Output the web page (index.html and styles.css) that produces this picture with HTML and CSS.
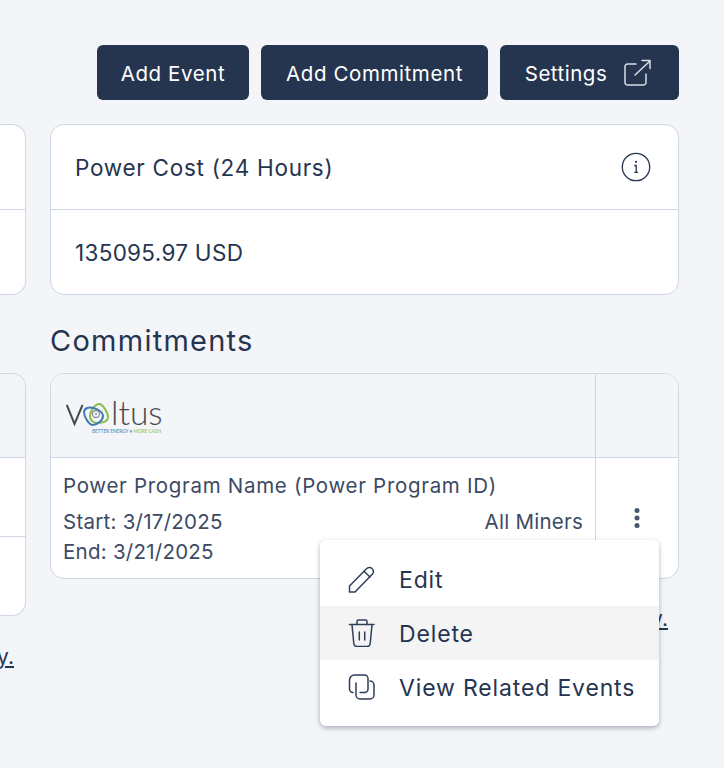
FILE: index.html
```html
<!DOCTYPE html>
<html lang="en">
<head>
<meta charset="utf-8">
<title>Power Program</title>
<link rel="stylesheet" href="styles.css">
</head>
<body>
<div class="page">
  <div class="actions">
    <button class="btn btn-event"><span class="btn-label">Add Event</span></button>
    <button class="btn btn-commit"><span class="btn-label">Add Commitment</span></button>
    <button class="btn btn-settings"><span class="btn-label">Settings</span>
      <svg class="ext" width="28" height="28" viewBox="0 0 28 28" fill="none" stroke="#d9dce3" stroke-width="1.500" stroke-linecap="round" stroke-linejoin="round"><path d="M13 5H4.500A2.500 2.500 0 0 0 2 7.500V23.500A2.500 2.500 0 0 0 4.500 26H20.500A2.500 2.500 0 0 0 23 23.500V15"/><path d="M12 16L27 2M19 1.500H27V9.500"/></svg>
    </button>
  </div>
  <div class="columns">
    <div class="col-left">
      <div class="card stat-card">
        <div class="card-head"></div>
        <div class="card-body"></div>
      </div>
      <div class="spacer"></div>
      <div class="card side-table">
        <div class="side-head"></div>
        <div class="side-row"></div>
        <div class="side-last"></div>
      </div>
      <div class="link-row link-row-left"><a class="link" href="#">View Full History.</a></div>
    </div>
    <div class="col-right">
      <div class="card stat-card full">
        <div class="card-head">
          <span class="stat-title">Power Cost (24 Hours)</span>
          <svg class="info" width="30" height="30" viewBox="0 0 30 30" fill="none" stroke="#26354f"><circle cx="15" cy="15" r="13.700" stroke-width="1.300"/><circle cx="15" cy="9.800" r="1.100" fill="#26354f" stroke="none"/><path d="M13.300 13.500H15.200V20M13.300 20.300H17" stroke-width="1.300"/></svg>
        </div>
        <div class="card-body"><span class="stat-value">135095.97 USD</span></div>
      </div>
      <h2 class="section-title">Commitments</h2>
      <div class="card commit full">
        <div class="commit-logo">
          <svg class="logo" width="100" height="38" viewBox="0 0 100 38" fill="none">
            <path d="M0.800 8L8.500 27L16.500 8" stroke="#47494d" stroke-width="2"/>
            <path d="M33 7C37 7 42 16 42 20C42 25 36 26 31 26C26 26 24 22 24 19C24 14 29 7 33 7Z" stroke="#8dbb48" stroke-width="2"/>
            <path d="M21 11C27 9 37 14 37 19C37 24 30 28 27 28C23 28 18 20 18 15C18 13 19 12 21 11Z" stroke="#3e7cb5" stroke-width="2"/>
            <circle cx="30" cy="17" r="3.500" stroke="#8c8f94" stroke-width="1.300"/>
            <circle cx="30" cy="17" r="1" fill="#8c8f94"/>
            <text class="logo-word" x="45" y="28">ltus</text>
            <text class="logo-tag" x="26" y="36">BETTER ENERGY • <tspan class="logo-tag-green">MORE CASH</tspan></text>
          </svg>
        </div>
        <div class="commit-head-menu"></div>
        <div class="commit-info">
          <div class="program">Power Program Name (Power Program ID)</div>
          <div class="dates">
            <div class="date-list">
              <div>Start: 3/17/2025</div>
              <div>End: 3/21/2025</div>
            </div>
            <div class="scope">All Miners</div>
          </div>
        </div>
        <div class="commit-action">
          <svg class="kebab" width="8" height="20" viewBox="0 0 8 20" fill="#47566f"><circle cx="4" cy="2.500" r="2.500"/><circle cx="4" cy="10" r="2.500"/><circle cx="4" cy="17.500" r="2.500"/></svg>
        </div>
      </div>
      <div class="link-row link-row-right"><a class="link" href="#">View Full History.</a></div>
    </div>
  </div>
  <div class="menu">
    <div class="menu-item">
      <svg class="menu-icon" width="28" height="28" viewBox="0 0 28 28" fill="none" stroke="#2f3e58" stroke-width="1.500" stroke-linecap="round" stroke-linejoin="round"><path d="M1.500 21L18.500 3.800A3.800 3.800 0 0 1 24 3.500A3.800 3.800 0 0 1 24.500 9L7 27H1.500Z"/><path d="M16 6.300L22 12"/></svg>
      <span class="menu-label">Edit</span>
    </div>
    <div class="menu-item active">
      <svg class="menu-icon" width="28" height="28" viewBox="0 0 28 28" fill="none" stroke="#2f3e58" stroke-width="1.500" stroke-linecap="round" stroke-linejoin="round"><path d="M1.500 5.500H26"/><path d="M9 5V2.500A1.500 1.500 0 0 1 10.500 1H17.500A1.500 1.500 0 0 1 19 2.500V5"/><path d="M4 6L5.800 24.500A3.300 3.300 0 0 0 9 27.500H19A3.300 3.300 0 0 0 22.200 24.500L24 6"/><path d="M11.300 13V21M16.700 13V21"/></svg>
      <span class="menu-label">Delete</span>
    </div>
    <div class="menu-item">
      <svg class="menu-icon" width="28" height="28" viewBox="0 0 28 28" fill="none" stroke="#2f3e58" stroke-width="1.500" stroke-linecap="round" stroke-linejoin="round"><path d="M5 19.500A3.500 3.500 0 0 1 1.500 16V7A5 5 0 0 1 6.500 2H16.500A3.500 3.500 0 0 1 20 5.500V16A3.500 3.500 0 0 1 16.500 19.500H12"/><path d="M22 8A4 4 0 0 1 26 12V22A4 4 0 0 1 22 26H12A4 4 0 0 1 8 22V10"/></svg>
      <span class="menu-label">View Related Events</span>
    </div>
  </div>
</div>
</body>
</html>
```

FILE: styles.css
```css
* { box-sizing: border-box; }
html, body { margin: 0; padding: 0; }
body {
  background: #f3f5f9;
  color: #26354f;
  font-family: Inter, "Noto Sans", sans-serif;
  overflow: hidden;
}
.page {
  position: relative;
  width: 724px;
  height: 768px;
  overflow: hidden;
  padding-top: 45px;
}
.actions {
  display: flex;
  justify-content: flex-end;
  gap: 12px;
  padding-right: 45px;
  height: 55px;
}
.btn {
  display: flex;
  align-items: center;
  justify-content: center;
  height: 55px;
  background: #26354f;
  color: #fff;
  border: 0;
  border-radius: 6px;
  font: inherit;
  font-size: 20.500px;
  letter-spacing: 0.600px;
  padding: 0;
}
.btn-label { padding-top: 2px; }
.btn-event { width: 152px; }
.btn-commit { width: 227px; }
.btn-settings { width: 179px; gap: 16px; padding-right: 3px; letter-spacing: 0.500px; }
.ext { flex: none; }
.columns {
  display: grid;
  grid-template-columns: 26px 629px;
  column-gap: 24px;
  margin-top: 24px;
}
.col-left { overflow: hidden; min-height: 560px; }
.card {
  background: #fff;
  border: 1px solid #ced7e4;
  border-radius: 14px;
}
.col-left .card {
  border-left: 0;
  border-top-left-radius: 0;
  border-bottom-left-radius: 0;
}
.stat-card { height: 171px; }
.card-head {
  height: 85px;
  border-bottom: 1px solid #ced7e4;
  display: flex;
  align-items: center;
  justify-content: space-between;
  padding: 0 27px 0 24px;
}
.card-body {
  height: 84px;
  display: flex;
  align-items: center;
  padding-left: 24px;
}
.stat-title { font-size: 22.500px; letter-spacing: 0.720px; }
.stat-value { font-size: 22.500px; letter-spacing: 0.300px; }
.spacer { height: 78px; }
.side-table { height: 243px; }
.side-head { height: 84px; background: #f3f5f9; border-radius: 0 13px 0 0; border-bottom: 1px solid #ced7e4; }
.side-row { height: 79px; border-bottom: 1px solid #ced7e4; }
.link-row {
  display: flex;
  justify-content: flex-end;
}
.link-row-left { margin-top: 28px; padding-right: 12px; }
.link-row-right { margin-top: 27px; padding-right: 11px; }
.link {
  flex: none;
  color: #26354f;
  font-size: 21px;
  white-space: nowrap;
}
.section-title {
  margin: 28px 0 14px;
  height: 36px;
  line-height: 36px;
  font-size: 29px;
  font-weight: 400;
  letter-spacing: 1.250px;
}
.commit {
  display: grid;
  grid-template-columns: 545px 1fr;
  grid-template-rows: 84px 120px;
  height: 206px;
  overflow: hidden;
}
.commit-logo, .commit-head-menu {
  background: #f3f5f9;
  border-bottom: 1px solid #ced7e4;
}
.commit-logo { border-right: 1px solid #ced7e4; padding: 24px 0 0 15px; }
.logo { display: block; margin-top: -1px; }
.logo-word { font-family: Lato, sans-serif; font-size: 33.500px; fill: #47494d; font-weight: 300; }
.logo-tag { font-family: Lato, sans-serif; font-size: 4.700px; fill: #6d9cc7; font-weight: 700; }
.logo-tag-green { fill: #a7cc74; }
.commit-info {
  border-right: 1px solid #ced7e4;
  padding: 16px 12px 0 12px;
  font-size: 20.500px;
  color: #3c4a63;
}
.program { line-height: 24px; letter-spacing: 0.700px; }
.dates {
  display: flex;
  justify-content: space-between;
  margin-top: 9px;
  line-height: 30px;
  letter-spacing: 0.250px;
}
.commit-action {
  display: flex;
  justify-content: center;
  padding-top: 50px;
}
.kebab { display: block; }
.menu {
  position: absolute;
  left: 320px;
  top: 540px;
  width: 339px;
  height: 186px;
  padding: 12px 0;
  background: #fff;
  border-radius: 6px;
  box-shadow: 0 2px 5px rgba(30, 40, 60, 0.35);
}
.menu-item {
  display: flex;
  align-items: center;
  gap: 23px;
  height: 54px;
  padding-left: 28px;
  font-size: 23px;
  letter-spacing: 0.850px;
}
.menu-label { padding-top: 2px; }
.menu-item.active { background: #f4f4f5; }
.menu-icon { flex: none; }
```
